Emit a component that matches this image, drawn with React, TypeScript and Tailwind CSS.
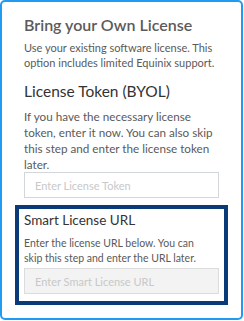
export default function App() {
  const font = { fontFamily: 'Lato, "Open Sans", sans-serif' };
  return (
    <div className="w-[244px] h-[321px] bg-white" style={font}>
      <div className="w-[243px] h-[320px] border-2 border-[#1f9bf2] rounded-[5px] pt-[13px] pl-[22px] pr-[10px] box-border">
        <div className="text-[16px] leading-[20px] font-semibold text-[#5b5b5b] whitespace-nowrap">Bring your Own License</div>
        <div className="mt-[5px] text-[11px] leading-[15px] text-[#5a5a5a] whitespace-nowrap">
          Use your existing software license. This
          <br />
          option includes limited Equinix support.
        </div>
        <div className="mt-[12px] text-[15.5px] leading-[18px] text-[#333] whitespace-nowrap">License Token (BYOL)</div>
        <div className="mt-[8px] text-[11.7px] leading-[16px] text-[#5a5a5a] whitespace-nowrap">
          If you have the necessary license
          <br />
          token, enter it now. You can also skip
          <br />
          this step and enter the license token
          <br />
          later.
        </div>
        <input
          className="block w-[195px] h-[26px] border border-[#d3d6da] bg-white px-[10px] text-[11px] placeholder:text-[#c8c8c8] outline-none"
          placeholder="Enter License Token"
          style={font}
        />
        <div className="mt-[7px] -ml-[9px] w-[213px] border-4 border-[#0b3a78] pt-[2px] pl-[5px] pr-[5px] pb-[7px]">
          <div className="text-[13.5px] leading-[18px] text-[#333] whitespace-nowrap">Smart License URL</div>
          <div className="mt-[7px] text-[10.5px] leading-[15px] text-[#5a5a5a] whitespace-nowrap">
            Enter the license URL below. You can
            <br />
            skip this step and enter the URL later.
          </div>
          <input
            className="block mt-[2px] w-[195px] h-[26px] border border-[#dcdcdc] bg-[#f3f3f3] px-[10px] text-[11px] placeholder:text-[#c8c8c8] outline-none"
            placeholder="Enter Smart License URL"
            style={font}
          />
        </div>
      </div>
    </div>
  );
}
